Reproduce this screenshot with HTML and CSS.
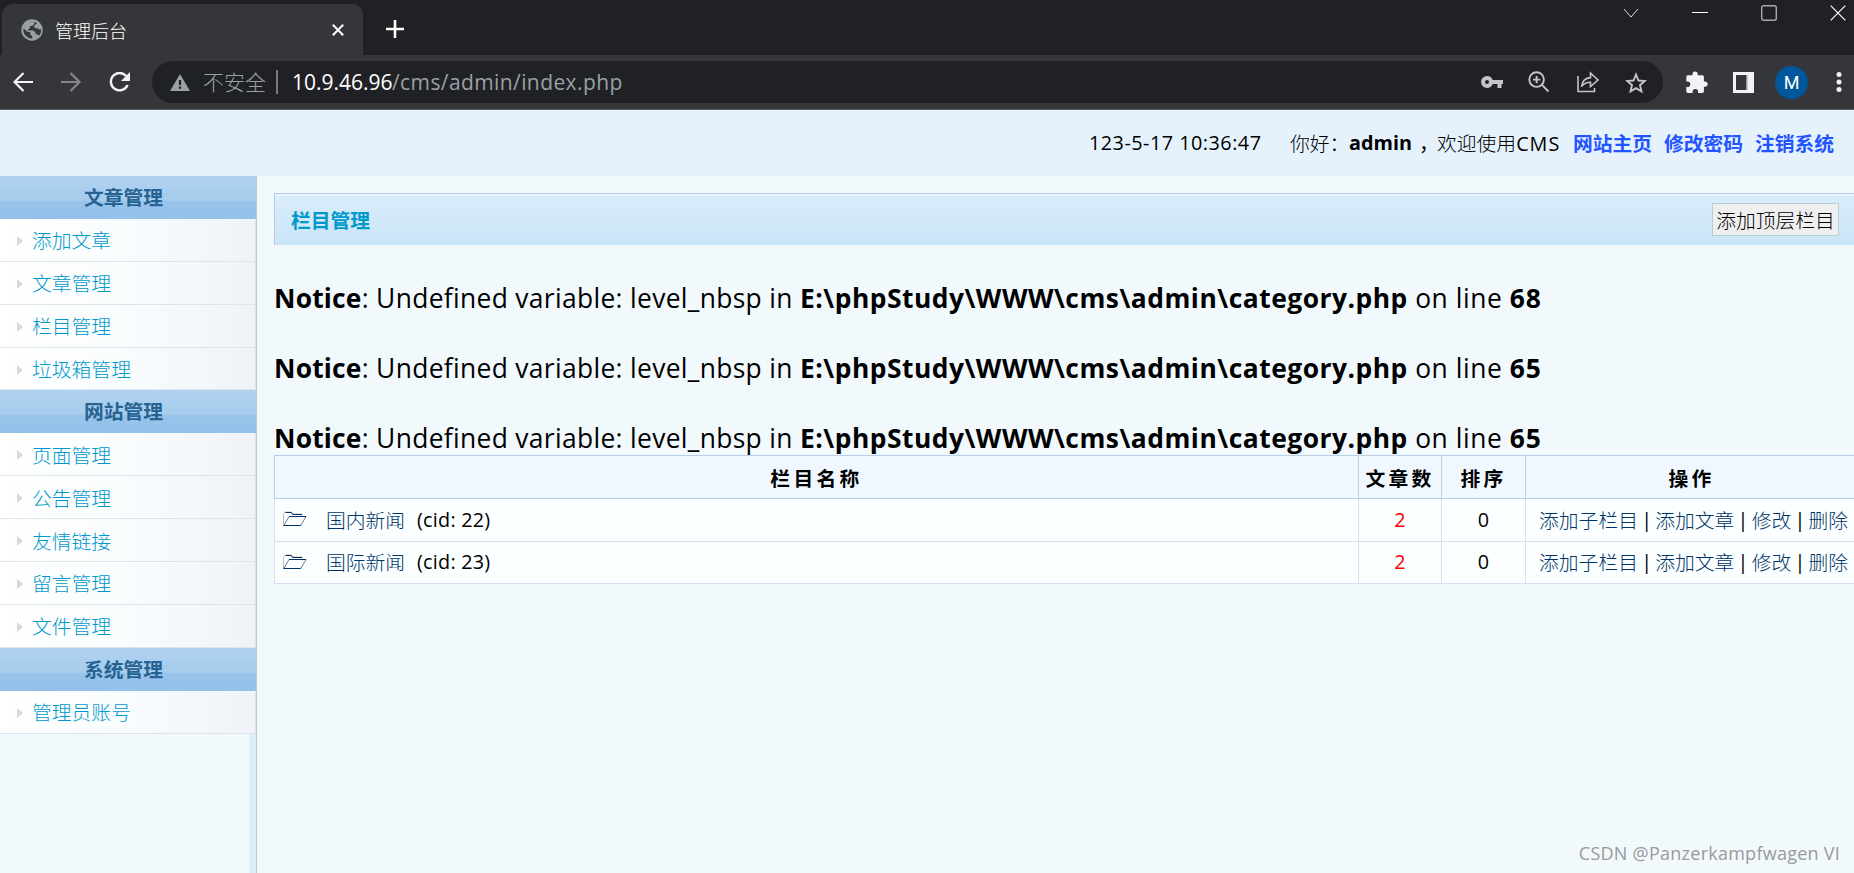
FILE: index.html
```html
<!DOCTYPE html>
<html lang="zh-CN">
<head>
	<meta charset="utf-8">
	<title>管理后台</title>
	<link rel="stylesheet" href="styles.css">
</head>
<body>
	<div class="browser">
		<div class="tabs">
			<div class="tab">
				<svg class="globe" width="22" height="22" viewBox="0 0 22 22"><circle cx="11" cy="11" r="10.7" fill="#9aa0a6"/><path d="M2.5 9.5l4.3 3.6h2.4v2.5l2 1.5v2.4A8.6 8.6 0 0 1 2.5 9.5zM9 2.7h4.3v2.2l-2.1 2.2H9v2.1l-2 1v1.3h5.6l2 2.2v1.5l2.2.4 1.2 1.2a8.6 8.6 0 0 0 2.2-6.5l-2 .2-1.3-1.2h-2.8l-1.2-1.6 1.5-2.4 1.9-.8A8.8 8.8 0 0 0 9 2.7z" fill="#35363a"/></svg>
				<span class="tab-title">管理后台</span>
				<svg class="tab-close" width="12" height="12" viewBox="0 0 12 12"><path d="M.8.8l10.4 10.4M11.2.8L.8 11.2" stroke="#fff" stroke-width="2"/></svg>
			</div>
			<svg class="new-tab" width="18" height="18" viewBox="0 0 18 18"><path d="M9 0v18M0 9h18" stroke="#fff" stroke-width="2.6"/></svg>
			<div class="window-buttons">
				<svg width="16" height="16" viewBox="0 0 16 16"><path d="M1 4l7 8 7-8" fill="none" stroke="#ddd"/></svg>
				<svg width="16" height="16" viewBox="0 0 16 16"><path d="M0 7.5h16" stroke="#fff"/></svg>
				<svg width="16" height="16" viewBox="0 0 16 16"><rect x=".7" y=".7" width="14.6" height="14.6" rx="2" fill="none" stroke="#aaa" stroke-width="1.4"/></svg>
				<svg width="16" height="16" viewBox="0 0 16 16"><path d="M.7.7l14.6 14.6M15.3.7L.7 15.3" stroke="#fff" stroke-width="1.2"/></svg>
			</div>
		</div>
		<div class="toolbar">
			<div class="nav">
				<svg width="20" height="20" viewBox="0 0 20 20"><path d="M20 10H1.5M10.5 1L1.5 10l9 9" fill="none" stroke="#f1f3f4" stroke-width="2.2"/></svg>
				<svg width="20" height="20" viewBox="0 0 20 20"><path d="M0 10h18.5M9.5 1l9 9-9 9" fill="none" stroke="#86878a" stroke-width="2.2"/></svg>
				<svg width="22" height="20" viewBox="0 0 22 20"><path d="M17.2 4A8.7 8.7 0 1 0 18.6 13" fill="none" stroke="#f1f3f4" stroke-width="2.4"/><path d="M21 0v9h-9z" fill="#f1f3f4"/></svg>
			</div>
			<div class="address">
				<svg class="warn" width="20" height="17" viewBox="0 0 20 17"><path d="M10 0l10 17H0z" fill="#9aa0a6"/><path d="M10 6v5M10 12.5v2.3" stroke="#202124" stroke-width="2.2"/></svg>
				<span class="unsafe">不安全</span>
				<span class="divider"></span>
				<span class="host">10.9.46.96</span><span class="path">/cms/admin/index.php</span>
				<div class="address-icons">
					<svg width="22" height="12" viewBox="0 0 22 12"><path d="M6 0a6 6 0 0 1 5.7 4H22v4h-1.5v4h-4V8h-4.8A6 6 0 1 1 6 0zm0 4a2 2 0 1 0 0 4 2 2 0 0 0 0-4z" fill="#c4c5c7" fill-rule="evenodd"/></svg>
					<svg width="22" height="22" viewBox="0 0 22 22"><g fill="none" stroke="#c4c5c7" stroke-width="1.9"><circle cx="8.6" cy="8.6" r="7.3"/><path d="M13.9 13.9l6.6 6.6M8.6 5v7.2M5 8.6h7.2"/></g></svg>
					<svg width="24" height="22" viewBox="0 0 24 22"><path d="M2 5v15.5h16.500V17M5.500 15.500C6.300 9.500 9.500 7 14.500 6.600V2l7.500 7-7.500 6.600v-4.400c-4.500 0-6.800 1.300-9 4.300z" fill="none" stroke="#c4c5c7" stroke-width="1.6"/></svg>
					<svg width="22" height="21" viewBox="0 0 22 21"><path d="M11 2.500l2.500 6 6.300.5-4.800 4.200 1.500 6.200L11 16.100l-5.500 3.300L7 13.200 2.200 9l6.300-.5z" fill="none" stroke="#c4c5c7" stroke-width="1.9"/></svg>
				</div>
			</div>
			<div class="tools">
				<svg width="22" height="22" viewBox="0 0 22 22"><path d="M1.800 4.300H6.500V3a2.600 2.600 0 0 1 5.200 0v1.300h4.600q1.600 0 1.600 1.600v4.500h1a2.700 2.700 0 0 1 0 5.400h-1v4.500q0 1.600-1.600 1.600h-4.200v-1.200a2.700 2.700 0 0 0-5.500 0v1.200H1.800Q.3 21.900.3 20.300v-4.200h1.200a2.800 2.800 0 0 0 0-5.600H.3V5.900q0-1.600 1.500-1.600z" fill="#f1f3f4"/></svg>
				<svg width="21" height="21" viewBox="0 0 21 21"><path d="M0 0h21v21H0z" fill="#f1f3f4"/><path d="M3 3h10v15H3z" fill="#35363a"/><path d="M13 3h1.500v15H13z" fill="#999"/></svg>
				<span class="avatar">M</span>
				<svg width="6" height="20" viewBox="0 0 6 20"><g fill="#f1f3f4"><circle cx="3" cy="2.5" r="2.5"/><circle cx="3" cy="10" r="2.5"/><circle cx="3" cy="17.5" r="2.5"/></g></svg>
			</div>
		</div>
	</div>

	<header>
		<span class="time">123-5-17 10:36:47</span>
		<span class="hello">你好：</span><b class="user">admin</b><span class="comma">，</span>
		<span class="welcome">欢迎使用<span class="cms">CMS</span></span>
		<a href="#">网站主页</a>
		<a href="#">修改密码</a>
		<a href="#">注销系统</a>
	</header>

	<div class="page">
		<div class="sidebar">
			<h3>文章管理</h3>
			<ul>
				<li><a href="#">添加文章</a></li>
				<li><a href="#">文章管理</a></li>
				<li><a href="#">栏目管理</a></li>
				<li><a href="#">垃圾箱管理</a></li>
			</ul>
			<h3>网站管理</h3>
			<ul>
				<li><a href="#">页面管理</a></li>
				<li><a href="#">公告管理</a></li>
				<li><a href="#">友情链接</a></li>
				<li><a href="#">留言管理</a></li>
				<li><a href="#">文件管理</a></li>
			</ul>
			<h3>系统管理</h3>
			<ul>
				<li><a href="#">管理员账号</a></li>
			</ul>
		</div>

		<div class="main">
			<div class="title-bar">
				<h2>栏目管理</h2>
				<button>添加顶层栏目</button>
			</div>
			<div class="notices">
				<p><b class="label">Notice</b><span class="text">: Undefined variable: level_nbsp in </span><b class="file">E:\phpStudy\WWW\cms\admin\category.php</b><span class="line"> on line </span><b class="no">68</b></p>
				<p><b class="label">Notice</b><span class="text">: Undefined variable: level_nbsp in </span><b class="file">E:\phpStudy\WWW\cms\admin\category.php</b><span class="line"> on line </span><b class="no">65</b></p>
				<p><b class="label">Notice</b><span class="text">: Undefined variable: level_nbsp in </span><b class="file">E:\phpStudy\WWW\cms\admin\category.php</b><span class="line"> on line </span><b class="no">65</b></p>
			</div>
			<table>
				<tr>
					<th class="name">栏目名称</th>
					<th class="count">文章数</th>
					<th class="order">排序</th>
					<th class="action">操作</th>
				</tr>
				<tr>
					<td><div class="category"><svg width="25" height="16" viewBox="0 0 25 16"><path d="M1.500 15V3.500L3 1h6l1.500 2H20v2.500" fill="none" stroke="#c9b8b0"/><path d="M3.500 1.500h6l1 2H20" fill="none" stroke="#036"/><path d="M1.500 15L7 5.500h17L18.500 15" fill="none" stroke="#68809a"/><path d="M7 5.500h17M1.500 14.500h17" stroke="#036"/></svg><a href="#">国内新闻</a><span>(cid: 22)</span></div></td>
					<td class="num red">2</td>
					<td class="num">0</td>
					<td><div class="links"><a href="#">添加子栏目</a><i>|</i><a href="#">添加文章</a><i>|</i><a href="#">修改</a><i>|</i><a href="#">删除</a></div></td>
				</tr>
				<tr>
					<td><div class="category"><svg width="25" height="16" viewBox="0 0 25 16"><path d="M1.500 15V3.500L3 1h6l1.500 2H20v2.500" fill="none" stroke="#c9b8b0"/><path d="M3.500 1.500h6l1 2H20" fill="none" stroke="#036"/><path d="M1.500 15L7 5.500h17L18.500 15" fill="none" stroke="#68809a"/><path d="M7 5.500h17M1.500 14.500h17" stroke="#036"/></svg><a href="#">国际新闻</a><span>(cid: 23)</span></div></td>
					<td class="num red">2</td>
					<td class="num">0</td>
					<td><div class="links"><a href="#">添加子栏目</a><i>|</i><a href="#">添加文章</a><i>|</i><a href="#">修改</a><i>|</i><a href="#">删除</a></div></td>
				</tr>
			</table>
		</div>
	</div>
	<div class="watermark">CSDN @Panzerkampfwagen VI</div>
</body>
</html>
```

FILE: styles.css
```css
* {
	margin: 0;
	padding: 0;
	box-sizing: border-box;
}

body {
	height: 873px;
	display: flex;
	flex-direction: column;
	overflow: hidden;
	background: #f2f9fd;
	color: #000;
	font-family: "Open Sans", "Noto Sans CJK SC", sans-serif;
	font-size: 19.8px;
	white-space: nowrap;
}

a {
	text-decoration: none;
}

svg {
	display: block;
	flex: none;
}

/* browser */
.browser {
	height: 110px;
	background: #35363a;
	border-bottom: 1px solid #5c5d60;
}

.tabs {
	display: flex;
	height: 55px;
	background: #202124;
}

.tab {
	display: flex;
	align-items: center;
	width: 361px;
	height: 51px;
	margin: 4px 0 0 2px;
	padding: 0 19px 0 19px;
	background: #35363a;
	border-radius: 11px 11px 0 0;
}

.tab-title {
	flex: 1;
	margin-left: 12px;
	padding-top: 1px;
	color: #fff;
	font-size: 18px;
	font-weight: 300;
}

.new-tab {
	margin: 20px 0 0 23px;
}

.window-buttons {
	display: flex;
	gap: 53px;
	margin: 5px 8px 0 auto;
}

.toolbar {
	display: flex;
	align-items: center;
	height: 54px;
}

.nav {
	display: flex;
	gap: 28px;
	width: 152px;
	padding-left: 13px;
}

.address {
	display: flex;
	align-items: center;
	width: 1511px;
	height: 42px;
	padding: 0 16px 0 18px;
	background: #202124;
	border-radius: 21px;
	font-size: 21px;
	color: #9aa0a6;
}

.unsafe {
	width: 64px;
	margin-left: 13px;
	padding-bottom: 2px;
	font-weight: 300;
}

.divider {
	width: 2px;
	height: 24px;
	margin: 0 14px 0 9px;
	background: #77797c;
}

.host {
	width: 100px;
	color: #fff;
}

.path {
	letter-spacing: 0.4px;
}

.address-icons {
	display: flex;
	align-items: center;
	gap: 25.5px;
	margin-left: auto;
}

.tools {
	display: flex;
	align-items: center;
	margin-left: 23px;
}

.tools svg + svg {
	margin-left: 25px;
}

.avatar {
	width: 33px;
	margin: 0 28px 0 21px;
	background: #01579b;
	border-radius: 50%;
	color: #fff;
	font: 18px/33px Roboto, sans-serif;
	text-align: center;
}

/* top */
header {
	display: flex;
	align-items: center;
	justify-content: flex-end;
	height: 66px;
	padding: 0 20px 1px 0;
	background: #e5f2fc;
}

header a {
	width: 79px;
	margin-left: 12px;
	color: #2255ff;
	font-weight: bold;
}

.time {
	width: 172px;
	margin-right: 29px;
	letter-spacing: 0.5px;
}

.hello {
	width: 59px;
	font-weight: 300;
}

.user {
	width: 63px;
}

.comma {
	width: 25px;
	padding-left: 7px;
}

.welcome {
	width: 124px;
	font-weight: 300;
}

.cms {
	font-weight: 400;
	letter-spacing: 1px;
}

.page {
	display: flex;
	flex: 1;
}

/* left menu */
.sidebar {
	flex: none;
	width: 257px;
	border-right: 1px solid #b5cfd9;
	background: linear-gradient(to left, #ddeefa 7px, transparent 7px);
}

.sidebar h3 {
	height: 42.9px;
	padding: 1px 9px 0 0;
	background: linear-gradient(#b0d2f0, #a5ccec 59%, #99c4ea 59%, #92c1ea);
	color: #266392;
	font-size: 19.8px;
	line-height: 42.9px;
	text-align: center;
}

.sidebar ul {
	list-style: none;
}

.sidebar li {
	display: flex;
	align-items: center;
	height: 42.9px;
	padding-left: 17px;
	border-right: 1px solid #dde5ea;
	border-bottom: 1px solid #dce5ea;
	background: linear-gradient(to right, #fff, #f9fcfd 50%, #eff3f8);
}

.sidebar li::before {
	content: "";
	margin-top: 2px;
	border: 5px solid transparent;
	border-left: 6px solid #d6d8da;
	border-right: 0;
}

.sidebar a {
	margin-left: 9px;
	color: #0099cc;
	font-weight: 300;
}

/* content */
.main {
	flex: 1;
	min-width: 0;
	overflow: hidden;
	padding: 17px 0 0 17px;
}

.title-bar {
	display: flex;
	align-items: center;
	height: 52px;
	padding: 0 15px 0 16px;
	border-top: 1px solid #b5cbe4;
	border-left: 1px solid #b5cbe4;
	background: linear-gradient(#f0f7fd 1px, #d9ecfa 2px, #cae5f8);
}

.title-bar h2 {
	flex: 1;
	color: #0099cc;
	font-size: 19.8px;
}

.title-bar button {
	width: 127px;
	height: 33px;
	padding-top: 2px;
	border: 1px solid #b5cfd9;
	background: #efefef;
	font: inherit;
	font-weight: 300;
	line-height: 29px;
}

.notices {
	padding-top: 1px;
	margin-bottom: -1px;
	font-size: 26.4px;
	line-height: 35px;
}

.notices p {
	padding-top: 35px;
}

.label {
	letter-spacing: 0.2px;
}

.text {
	letter-spacing: 0.33px;
}

.file {
	letter-spacing: 0.5px;
}

.line {
	letter-spacing: 0.55px;
}

.no {
	letter-spacing: 1px;
}

table {
	width: 1584px;
	table-layout: fixed;
	border-collapse: collapse;
	border-left: 1px solid #bfcfe5;
}

th {
	height: 43px;
	border: 1px solid #b8cfe5;
	background: #f0f7ff;
	letter-spacing: 3.3px;
}

td {
	height: 42.5px;
	padding-bottom: 1px;
	border: 1px solid #d4e0f0;
	background: #fbffff;
}

.name {
	width: 1084px;
}

.count {
	width: 83px;
}

.order {
	width: 84px;
}

.category,
.links {
	display: flex;
	align-items: center;
}

.category {
	padding-left: 7px;
}

.category a {
	width: 79px;
	margin: 0 12px 0 19px;
}

.category span {
	letter-spacing: 0.25px;
}

td a {
	color: #003366;
	font-weight: 300;
}

.num {
	text-align: center;
}

.red {
	color: #ff0000;
}

.links {
	padding-left: 13px;
}

.links i {
	width: 17.3px;
	font-style: normal;
	text-align: center;
}

.watermark {
	position: absolute;
	right: 14px;
	bottom: 8px;
	color: #999;
	font-size: 18px;
	letter-spacing: 0.25px;
}
```
